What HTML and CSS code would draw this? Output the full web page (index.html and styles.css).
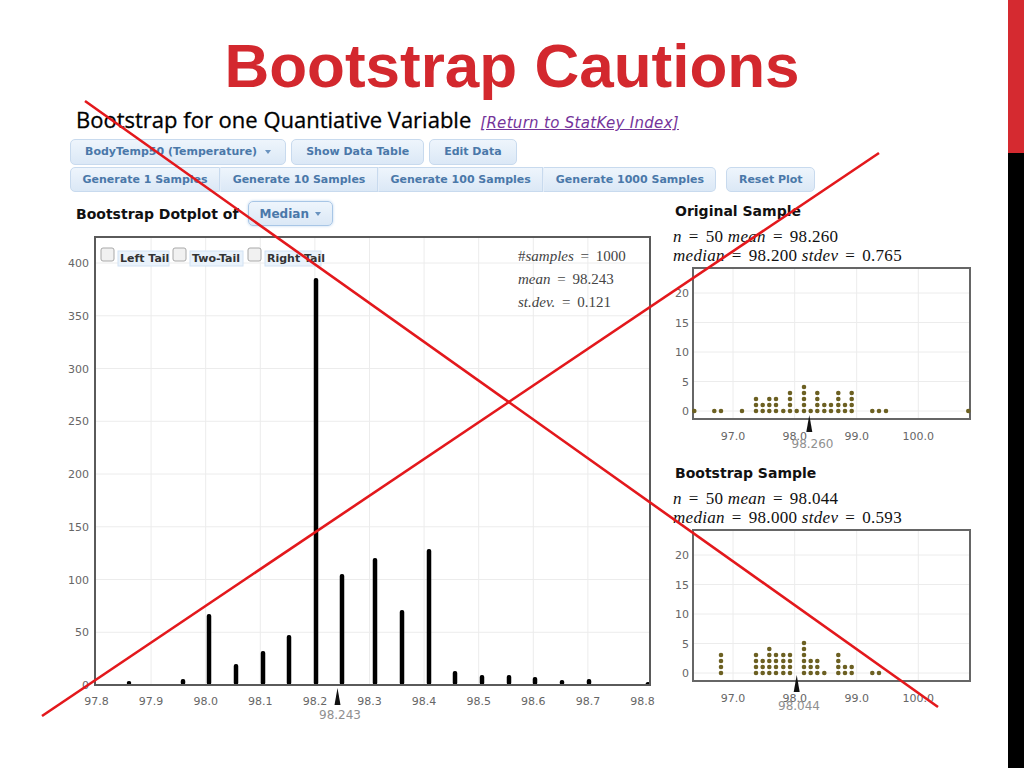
FILE: index.html
```html
<!DOCTYPE html>
<html lang="en">
<head>
  <meta charset="UTF-8" />
  <meta name="viewport" content="width=device-width, initial-scale=1" />
  <title>Bootstrap Cautions</title>
  <link rel="stylesheet" href="styles.css">
</head>
<body>
  <div class="slide">
    <main class="content">
      <h1 class="title">Bootstrap Cautions</h1>

      <section class="statkey">
        <div class="sk-head">
          <h2>Bootstrap for one Quantiative Variable</h2>
          <a href="#">[Return to StatKey Index]</a>
        </div>

        <div class="toolbar toolbar-1">
          <button class="btn">BodyTemp50 (Temperature) <span class="caret"></span></button>
          <button class="btn">Show Data Table</button>
          <button class="btn">Edit Data</button>
        </div>

        <div class="toolbar toolbar-2">
          <div class="btn-group">
            <button class="btn">Generate 1 Samples</button>
            <button class="btn">Generate 10 Samples</button>
            <button class="btn">Generate 100 Samples</button>
            <button class="btn">Generate 1000 Samples</button>
          </div>
          <button class="btn">Reset Plot</button>
        </div>

        <div class="panels">
          <div class="plot-col">
            <div class="dot-head">
              <span>Bootstrap Dotplot of</span>
              <button class="btn median">Median <span class="caret"></span></button>
            </div>

            <svg class="main-plot" width="590" height="495" viewBox="0 0 590 495">
              <rect class="plot-bg" x="25" y="7" width="555" height="448"/>
              <g class="grid">
                <line x1="26" x2="579" y1="33" y2="33"/>
                <line x1="26" x2="579" y1="85.75" y2="85.75"/>
                <line x1="26" x2="579" y1="138.5" y2="138.5"/>
                <line x1="26" x2="579" y1="191.25" y2="191.25"/>
                <line x1="26" x2="579" y1="244" y2="244"/>
                <line x1="26" x2="579" y1="296.75" y2="296.75"/>
                <line x1="26" x2="579" y1="349.5" y2="349.5"/>
                <line x1="26" x2="579" y1="402.25" y2="402.25"/>
                <line y1="8" y2="454" x1="81.1" x2="81.1"/>
                <line y1="8" y2="454" x1="135.7" x2="135.7"/>
                <line y1="8" y2="454" x1="190.3" x2="190.3"/>
                <line y1="8" y2="454" x1="244.9" x2="244.9"/>
                <line y1="8" y2="454" x1="299.5" x2="299.5"/>
                <line y1="8" y2="454" x1="354.1" x2="354.1"/>
                <line y1="8" y2="454" x1="408.7" x2="408.7"/>
                <line y1="8" y2="454" x1="463.3" x2="463.3"/>
                <line y1="8" y2="454" x1="517.9" x2="517.9"/>
              </g>

              <g class="bars">
                <rect x="56.75" y="451" width="4.5" height="4" rx="2"/>
                <rect x="110.75" y="449" width="4.5" height="6" rx="2"/>
                <rect x="136.75" y="384" width="4.5" height="71" rx="2"/>
                <rect x="163.75" y="434" width="4.5" height="21" rx="2"/>
                <rect x="190.75" y="421" width="4.5" height="34" rx="2"/>
                <rect x="216.75" y="405" width="4.5" height="50" rx="2"/>
                <rect x="243.75" y="48" width="4.5" height="407" rx="2"/>
                <rect x="269.75" y="344" width="4.5" height="111" rx="2"/>
                <rect x="302.75" y="328" width="4.5" height="127" rx="2"/>
                <rect x="329.75" y="380" width="4.5" height="75" rx="2"/>
                <rect x="356.75" y="319" width="4.5" height="136" rx="2"/>
                <rect x="382.75" y="441" width="4.5" height="14" rx="2"/>
                <rect x="409.75" y="445" width="4.5" height="10" rx="2"/>
                <rect x="436.75" y="445" width="4.5" height="10" rx="2"/>
                <rect x="462.75" y="447" width="4.5" height="8" rx="2"/>
                <rect x="489.75" y="450" width="4.5" height="5" rx="2"/>
                <rect x="516.75" y="449" width="4.5" height="6" rx="2"/>
                <rect x="575.75" y="452" width="4.5" height="3" rx="2"/>
              </g>

              <rect class="plot-frame" x="25" y="7" width="555" height="448"/>

              <g class="tick" text-anchor="end">
                <text x="19" y="37">400</text>
                <text x="19" y="89.75">350</text>
                <text x="19" y="142.5">300</text>
                <text x="19" y="195.25">250</text>
                <text x="19" y="248">200</text>
                <text x="19" y="300.75">150</text>
                <text x="19" y="353.5">100</text>
                <text x="19" y="406.25">50</text>
                <text x="19" y="459">0</text>
              </g>
              <g class="tick" text-anchor="middle">
                <text x="26.5" y="475">97.8</text>
                <text x="81.1" y="475">97.9</text>
                <text x="135.7" y="475">98.0</text>
                <text x="190.3" y="475">98.1</text>
                <text x="244.9" y="475">98.2</text>
                <text x="299.5" y="475">98.3</text>
                <text x="354.1" y="475">98.4</text>
                <text x="408.7" y="475">98.5</text>
                <text x="463.3" y="475">98.6</text>
                <text x="517.9" y="475">98.7</text>
                <text x="572.5" y="475">98.8</text>
              </g>

              <polygon class="marker" points="267.5,458 264.5,475 270.5,475"/>
              <text class="marker-label" x="270" y="489" text-anchor="middle">98.243</text>

              <g class="tails">
                <rect class="check" x="31" y="18" width="13" height="13" rx="2"/>
                <rect class="tail-label" x="48" y="21" width="51" height="15"/>
                <text x="50" y="32">Left Tail</text>
                <rect class="check" x="103" y="18" width="13" height="13" rx="2"/>
                <rect class="tail-label" x="120" y="21" width="53" height="15"/>
                <text x="122" y="32">Two-Tail</text>
                <rect class="check" x="178" y="18" width="13" height="13" rx="2"/>
                <rect class="tail-label" x="195" y="21" width="56" height="15"/>
                <text x="197" y="32">Right Tail</text>
              </g>

              <g class="stat">
                <text x="448" y="31">#<tspan class="mi">samples</tspan> = 1000</text>
                <text x="448" y="54"><tspan class="mi">mean</tspan> = 98.243</text>
                <text x="448" y="77"><tspan class="mi">st.dev.</tspan> = 0.121</text>
              </g>
            </svg>
          </div>

          <div class="sample-col">
            <div class="sample">
              <h3>Original Sample</h3>
              <div class="stats">
                <div><i>n</i><span class="eq">=</span>50 <i>mean</i><span class="eq">=</span>98.260</div>
                <div><i>median</i><span class="eq">=</span>98.200 <i>stdev</i><span class="eq">=</span>0.765</div>
              </div>
              <svg class="mini-plot" width="300" height="185" viewBox="0 0 300 185">
                <rect class="plot-bg" x="20" y="3" width="277" height="151"/>
                <g class="grid">
                  <line x1="21" x2="296" y1="28" y2="28"/>
                  <line x1="21" x2="296" y1="57.5" y2="57.5"/>
                  <line x1="21" x2="296" y1="87" y2="87"/>
                  <line x1="21" x2="296" y1="116.5" y2="116.5"/>
                  <line x1="21" x2="296" y1="146" y2="146"/>
                  <line y1="4" y2="153" x1="60" x2="60"/>
                  <line y1="4" y2="153" x1="121.7" x2="121.7"/>
                  <line y1="4" y2="153" x1="183.7" x2="183.7"/>
                  <line y1="4" y2="153" x1="245.3" x2="245.3"/>
                </g>
                <rect class="mini-frame" x="20" y="3" width="277" height="151"/>
                <path class="dots" d="M21.3 146v-.1M41.3 146v-.1M48 146v-.1M69 146v-.1M83 146v-12.1M89.7 146v-6.1M96.3 146v-12.1M103 146v-12.1M110.3 146v-.1M117 146v-18.1M123.7 146v-.1M131 146v-24.1M137.7 146v-.1M144.3 146v-18.1M151.3 146v-6.1M158 146v-6.1M165.3 146v-18.1M172 146v-6.1M178.7 146v-18.1M199.3 146v-.1M206 146v-.1M213 146v-.1M295.3 146v-.1"/>
                <g class="tick" text-anchor="end">
                  <text x="16" y="32">20</text>
                  <text x="16" y="61.5">15</text>
                  <text x="16" y="91">10</text>
                  <text x="16" y="120.5">5</text>
                  <text x="16" y="150">0</text>
                </g>
                <g class="tick" text-anchor="middle">
                  <text x="60" y="175">97.0</text>
                  <text x="121.7" y="175">98.0</text>
                  <text x="183.7" y="175">99.0</text>
                  <text x="245.3" y="175">100.0</text>
                </g>
                <polygon class="marker" points="136.3,150 133.3,167 139.3,167"/>
                <text class="marker-label" x="139.5" y="183" text-anchor="middle">98.260</text>
              </svg>
            </div>

            <div class="sample">
              <h3>Bootstrap Sample</h3>
              <div class="stats">
                <div><i>n</i><span class="eq">=</span>50 <i>mean</i><span class="eq">=</span>98.044</div>
                <div><i>median</i><span class="eq">=</span>98.000 <i>stdev</i><span class="eq">=</span>0.593</div>
              </div>
              <svg class="mini-plot" width="300" height="185" viewBox="0 0 300 185">
                <rect class="plot-bg" x="20" y="3" width="277" height="151"/>
                <g class="grid">
                  <line x1="21" x2="296" y1="28" y2="28"/>
                  <line x1="21" x2="296" y1="57.5" y2="57.5"/>
                  <line x1="21" x2="296" y1="87" y2="87"/>
                  <line x1="21" x2="296" y1="116.5" y2="116.5"/>
                  <line x1="21" x2="296" y1="146" y2="146"/>
                  <line y1="4" y2="153" x1="60" x2="60"/>
                  <line y1="4" y2="153" x1="121.7" x2="121.7"/>
                  <line y1="4" y2="153" x1="183.7" x2="183.7"/>
                  <line y1="4" y2="153" x1="245.3" x2="245.3"/>
                </g>
                <rect class="mini-frame" x="20" y="3" width="277" height="151"/>
                <path class="dots" d="M48 146v-18.1M83 146v-18.1M89.7 146v-12.1M96.3 146v-24.1M103 146v-18.1M110.3 146v-18.1M117 146v-18.1M131 146v-30.1M137.7 146v-12.1M144.3 146v-12.1M151.3 146v-.1M165.3 146v-18.1M172 146v-6.1M178.7 146v-6.1M199.3 146v-.1M206 146v-.1"/>
                <g class="tick" text-anchor="end">
                  <text x="16" y="32">20</text>
                  <text x="16" y="61.5">15</text>
                  <text x="16" y="91">10</text>
                  <text x="16" y="120.5">5</text>
                  <text x="16" y="150">0</text>
                </g>
                <g class="tick" text-anchor="middle">
                  <text x="60" y="175">97.0</text>
                  <text x="121.7" y="175">98.0</text>
                  <text x="183.7" y="175">99.0</text>
                  <text x="245.3" y="175">100.0</text>
                </g>
                <polygon class="marker" points="123.7,148 120.7,165 126.7,165"/>
                <text class="marker-label" x="126" y="183" text-anchor="middle">98.044</text>
              </svg>
            </div>
          </div>
        </div>
      </section>
    </main>

    <aside class="strip"><div class="strip-top"></div></aside>
  </div>

  <!-- the big red "X" drawn over the whole screenshot -->
  <svg class="cross" width="1024" height="768" viewBox="0 0 1024 768">
    <line x1="85" y1="101" x2="938" y2="707"/>
    <line x1="42" y1="716" x2="879" y2="153"/>
  </svg>
</body>
</html>
```

FILE: styles.css
```css
/* slide base */
* {
  box-sizing: border-box;
}

html, body {
  margin: 0;
}

body {
  position: relative;
  width: 1024px;
  height: 768px;
  overflow: hidden;
  background: #fff;
  color: #111;
  font-family: "DejaVu Sans", sans-serif;
}

.slide {
  display: flex;
  height: 768px;
}

.content {
  width: 1008px;
}

.strip {
  width: 16px;
  display: flex;
  flex-direction: column;
  background: #000;
}

.strip-top {
  height: 153px;
  background: #d52a30;
}

.title {
  margin: 35px 0 0;
  padding-left: 16px;
  text-align: center;
  font: bold 62px/62px "Liberation Sans", Arial, sans-serif;
  color: #d3282e;
}

/* statkey screenshot */
.statkey {
  margin-left: 70px;
}

.sk-head {
  display: flex;
  align-items: baseline;
  gap: 9px;
  height: 30px;
  margin-top: 7px;
  padding-left: 6px;
}

.sk-head h2 {
  margin: 0;
  font: 22px/30px "Open Sans", sans-serif;
  color: #000;
  -webkit-text-stroke: 0.3px #000;
}

.sk-head a {
  font: italic 15px/30px "DejaVu Sans", sans-serif;
  letter-spacing: 0.3px;
  color: #74349a;
}

.toolbar {
  display: flex;
  gap: 5px;
}

.toolbar-1 {
  margin-top: 5px;
}

.toolbar-2 {
  margin-top: 2px;
  gap: 10px;
}

.btn {
  display: flex;
  align-items: center;
  gap: 8px;
  height: 26px;
  padding: 0 14px;
  font: bold 11px/24px "DejaVu Sans", sans-serif;
  color: #4a78a9;
  background: linear-gradient(#eef5fc, #dbe8f6);
  border: 1px solid #c8daee;
  border-radius: 5px;
  cursor: pointer;
}

.toolbar-2 .btn {
  height: 25px;
  padding: 0 11.5px;
}

.btn-group {
  display: flex;
}

.btn-group .btn {
  border-radius: 0;
  border-left-color: #e6eff9;
}

.btn-group .btn:first-child {
  border-left-color: #c8daee;
  border-radius: 5px 0 0 5px;
}

.btn-group .btn:last-child {
  border-radius: 0 5px 5px 0;
}

.caret {
  width: 0;
  height: 0;
  border-left: 3.5px solid transparent;
  border-right: 3.5px solid transparent;
  border-top: 4px solid #6a93bf;
}

.panels {
  display: flex;
  margin-top: 8px;
}

.plot-col {
  width: 590px;
}

.dot-head {
  display: flex;
  align-items: center;
  gap: 9px;
  height: 25px;
  margin-top: 1px;
  padding-left: 6px;
  font: bold 14px "DejaVu Sans", sans-serif;
  color: #111;
}

.median {
  height: 25px;
  padding: 0 11px;
  gap: 6px;
  font-size: 12px;
  border-color: #a8c6e6;
  box-shadow: 0 0 3px #bcd5ef;
}

.main-plot,
.mini-plot {
  display: block;
  overflow: visible;
}

.main-plot {
  margin-top: 4px;
}

.plot-bg {
  fill: #fff;
}

.grid line {
  stroke: #ececec;
  stroke-width: 1;
}

.bars rect {
  fill: #000;
}

.plot-frame {
  fill: none;
  stroke: #5a5a5a;
  stroke-width: 2;
}

.mini-frame {
  fill: none;
  stroke: #666;
  stroke-width: 2;
}

.tick {
  font: 11px "DejaVu Sans", sans-serif;
  fill: #666;
}

.marker {
  fill: #111;
}

.marker-label {
  font: 12px "DejaVu Sans", sans-serif;
  fill: #909090;
}

.check {
  fill: #f1f1f1;
  stroke: #a8a8a8;
  stroke-width: 1;
}

.tail-label {
  fill: #e9f2fb;
  stroke: #d2e2f3;
  stroke-width: 1;
}

.tails text {
  font: bold 11px "DejaVu Sans", sans-serif;
  fill: #333;
}

.stat text {
  font: 15px "Liberation Serif", serif;
  word-spacing: 3px;
  fill: #444;
}

.mi {
  font-style: italic;
}

.dots {
  fill: none;
  stroke: #6c6022;
  stroke-width: 4.6;
  stroke-linecap: round;
  stroke-dasharray: 0 6;
}

.sample-col {
  width: 300px;
  margin-left: 13px;
  padding-top: 3px;
}

.sample + .sample {
  margin-top: 15px;
}

.sample h3 {
  margin: 0;
  padding-left: 2px;
  font: bold 14px/17px "DejaVu Sans", sans-serif;
  color: #111;
}

.stats {
  margin-top: 7px;
  font: 17px/19px "Liberation Serif", serif;
  letter-spacing: 0.3px;
  white-space: nowrap;
  color: #111;
}

.stats .eq {
  margin: 0 7px;
}

/* overlay cross */
.cross {
  position: absolute;
  top: 0;
  left: 0;
  pointer-events: none;
}

.cross line {
  stroke: #e3181c;
  stroke-width: 2.6;
}
```
